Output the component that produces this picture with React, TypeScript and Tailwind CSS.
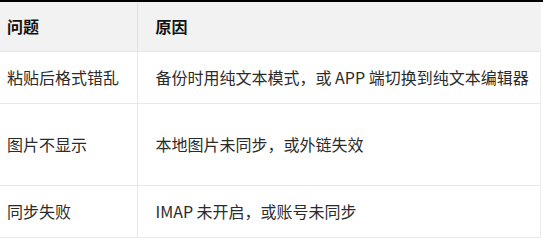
const rows = [
  { q: "粘贴后格式错乱", r: "备份时用纯文本模式，或 APP 端切换到纯文本编辑器", h: "h-[52px]" },
  { q: "图片不显示", r: "本地图片未同步，或外链失效", h: "h-[82px]" },
  { q: "同步失败", r: "IMAP 未开启，或账号未同步", h: "h-[52px]" },
];

export default function App() {
  return (
    <div
      className="w-[543px] h-[240px] bg-white overflow-hidden border-t-2 border-black"
      style={{ fontFamily: '"Microsoft YaHei", "Noto Sans CJK SC", sans-serif' }}
    >
      <table className="w-[541px] border-collapse text-[16px] text-[#2b2b2b]">
        <thead>
          <tr className="h-[49px] bg-[#f2f2f2] border-b border-[#e6e6e6]">
            <th className="w-[137px] pl-[7px] text-left font-bold text-[#111] border-r border-[#e0e0e0]">问题</th>
            <th className="pl-[18px] text-left font-bold text-[#111]">原因</th>
          </tr>
        </thead>
        <tbody>
          {rows.map((row) => (
            <tr key={row.q} className={`${row.h} border-b border-[#e8e8e8]`}>
              <td className="pl-[7px] border-r border-[#e8e8e8] whitespace-nowrap">{row.q}</td>
              <td className="pl-[18px] border-r border-[#ececec] whitespace-nowrap">{row.r}</td>
            </tr>
          ))}
        </tbody>
      </table>
    </div>
  );
}
